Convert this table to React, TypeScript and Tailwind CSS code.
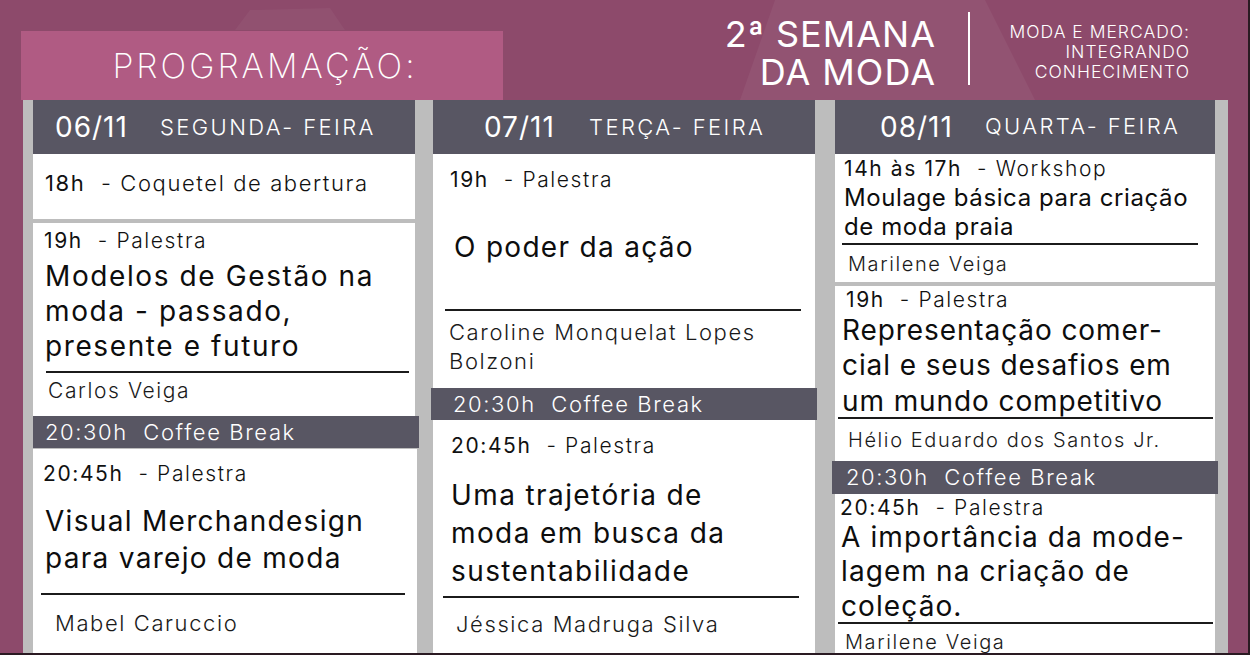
import React from "react";

const font = { fontFamily: '"Inter", "Open Sans", "DejaVu Sans", sans-serif' };

function DayHeader({ date, day, pad }: { date: string; day: string; pad: string }) {
  return (
    <div className={`h-[54px] bg-[#585663] flex items-center text-white ${pad}`}>
      <span className="w-[105px] text-[28px] font-normal tracking-[1px]">{date}</span>
      <span className="text-[22px] font-light tracking-[2.4px] uppercase">{day}</span>
    </div>
  );
}

function Coffee({ cls }: { cls: string }) {
  return (
    <div className={`h-[32px] bg-[#585663] text-white text-[22px] font-light leading-[32px] tracking-[1.6px] ${cls}`}>
      20:30h&nbsp; Coffee Break
    </div>
  );
}

function Label({ time, kind, cls }: { time: string; kind: string; cls: string }) {
  return (
    <div className={`text-[21px] leading-[26px] text-[#111] tracking-[1.6px] ${cls}`}>
      <span className="font-normal">{time}</span>
      <span className="font-light">&nbsp; - {kind}</span>
    </div>
  );
}

function Rule({ cls }: { cls: string }) {
  return <div className={`h-[2px] bg-[#1b1b1b] ${cls}`} />;
}

function Title({ lines, cls }: { lines: string[]; cls: string }) {
  return (
    <div className={`text-[#0d0d0d] font-normal whitespace-nowrap ${cls}`}>
      {lines.map((l) => (
        <div key={l}>{l}</div>
      ))}
    </div>
  );
}

function Name({ children, cls }: { children: React.ReactNode; cls: string }) {
  return <div className={`font-light text-[#1a1a1a] tracking-[1.6px] ${cls}`}>{children}</div>;
}

export default function App() {
  return (
    <div style={font} className="relative w-[1250px] h-[655px] overflow-hidden bg-[#8d4a6b] border-r-2 border-b-2 border-[#2a1a22]">
      <svg className="absolute left-0 top-0" width="1250" height="110" viewBox="0 0 1250 110">
        <polygon points="775,0 985,0 1035,100 740,100" fill="#ffffff" opacity="0.05" />
        <polygon points="235,30 250,10 330,8 345,30" fill="#ffffff" opacity="0.04" />
      </svg>

      {/* header */}
      <div className="relative h-[100px] flex">
        <div className="mt-[31px] ml-[21px] w-[482px] h-[69px] bg-[#b05b83] flex items-center justify-center">
          <span className="text-white text-[34px] font-extralight tracking-[3px] pl-[6px]">PROGRAMAÇÃO:</span>
        </div>
        <div className="ml-[201px] mt-[15px] w-[232px] text-white text-[36px] leading-[38px] font-normal tracking-[1px] text-right whitespace-nowrap">
          <div>2ª SEMANA</div>
          <div>DA MODA</div>
        </div>
        <div className="ml-[32px] mt-[12px] w-[2px] h-[73px] bg-white" />
        <div className="ml-[20px] mt-[22px] w-[200px] text-white text-[17.5px] leading-[20px] font-light text-right tracking-[1px] whitespace-nowrap">
          <div>MODA E MERCADO:</div>
          <div>INTEGRANDO</div>
          <div>CONHECIMENTO</div>
        </div>
      </div>

      {/* schedule */}
      <div className="ml-[23px] w-[1205px] h-[555px] bg-[#bdbdbd] pl-[10px] flex">
        {/* column 1 */}
        <div className="w-[382px] flex flex-col">
          <DayHeader date="06/11" day="Segunda- Feira" pad="pl-[22px]" />
          <div className="h-[65px] bg-white pl-[12px] pt-[16px]">
            <Label time="18h" kind="Coquetel de abertura" cls="text-[22px]" />
          </div>
          <div className="mt-[4px] h-[193px] bg-white pl-[11px]">
            <Label time="19h" kind="Palestra" cls="pt-[5px]" />
            <Title lines={["Modelos de Gestão na", "moda - passado,", "presente e futuro"]} cls="mt-[5px] text-[28px] leading-[35px] pl-[1px] tracking-[1.6px]" />
            <Rule cls="mt-[7px] ml-[2px] mr-[6px]" />
            <Name cls="mt-[5px] ml-[4px] text-[21px] leading-[26px]">Carlos Veiga</Name>
          </div>
          <Coffee cls="w-[386px] pl-[12px]" />
          <div className="mt-[1px] flex-1 bg-white pl-[10px] w-[384px]">
            <Label time="20:45h" kind="Palestra" cls="pt-[12px]" />
            <Title lines={["Visual Merchandesign", "para varejo de moda"]} cls="mt-[16px] text-[28px] leading-[37px] pl-[2px] tracking-[1.3px]" />
            <Rule cls="mt-[16px] ml-[-2px] mr-[12px]" />
            <Name cls="mt-[15px] ml-[12px] text-[22px] leading-[26px]">Mabel Caruccio</Name>
          </div>
        </div>

        {/* column 2 */}
        <div className="ml-[18px] w-[382px] flex flex-col">
          <DayHeader date="07/11" day="Terça- Feira" pad="pl-[51px]" />
          <div className="h-[234px] bg-white pl-[17px]">
            <Label time="19h" kind="Palestra" cls="pt-[13px]" />
            <Title lines={["O poder da ação"]} cls="mt-[37px] text-[28px] leading-[34px] pl-[4px] tracking-[1.3px]" />
            <Rule cls="mt-[45px] ml-[-5px] mr-[14px]" />
            <Name cls="mt-[7px] ml-[-1px] text-[22px] leading-[29px]">
              <div>Caroline Monquelat Lopes</div>
              <div>Bolzoni</div>
            </Name>
          </div>
          <Coffee cls="-ml-[2px] w-[386px] pl-[22px]" />
          <div className="flex-1 bg-white pl-[18px]">
            <Label time="20:45h" kind="Palestra" cls="pt-[13px]" />
            <Title lines={["Uma trajetória de", "moda em busca da", "sustentabilidade"]} cls="mt-[17px] text-[28px] leading-[38px] tracking-[1.4px]" />
            <Rule cls="mt-[6px] ml-[-8px] mr-[16px]" />
            <Name cls="mt-[13px] ml-[5px] text-[22px] leading-[26px]">Jéssica Madruga Silva</Name>
          </div>
        </div>

        {/* column 3 */}
        <div className="ml-[20px] w-[380px] flex flex-col">
          <DayHeader date="08/11" day="Quarta- Feira" pad="pl-[45px]" />
          <div className="h-[128px] bg-white pl-[9px]">
            <Label time="14h às 17h" kind="Workshop" cls="pt-[2px]" />
            <Title lines={["Moulage básica para criação", "de moda praia"]} cls="mt-[1px] text-[24px] leading-[29px] tracking-[0.6px]" />
            <Rule cls="mt-[2px] ml-[-2px] mr-[17px]" />
            <Name cls="mt-[6px] ml-[4px] text-[20px] leading-[26px]">Marilene Veiga</Name>
          </div>
          <div className="mt-[4px] h-[175px] bg-white pl-[11px]">
            <Label time="19h" kind="Palestra" cls="pt-[1px]" />
            <Title lines={["Representação comer-", "cial e seus desafios em", "um mundo competitivo"]} cls="text-[28px] leading-[35.5px] -ml-[4px] tracking-[0.9px]" />
            <Rule cls="mt-[-2px] ml-[-8px] mr-[2px]" />
            <Name cls="mt-[8px] ml-[2px] text-[20px] leading-[26px]">Hélio Eduardo dos Santos Jr.</Name>
          </div>
          <Coffee cls="-ml-[3px] w-[386px] pl-[14px] h-[33px]" />
          <div className="flex-1 bg-white pl-[5px]">
            <Label time="20:45h" kind="Palestra" cls="pt-[1px]" />
            <Title lines={["A importância da mode-", "lagem na criação de", "coleção."]} cls="mt-[-1px] text-[28px] leading-[34.5px] pl-[1px] tracking-[1.1px]" />
            <Rule cls="mt-[-1px] ml-[-2px] mr-[2px]" />
            <Name cls="mt-[5px] ml-[5px] text-[20px] leading-[26px]">Marilene Veiga</Name>
          </div>
        </div>
      </div>
    </div>
  );
}
